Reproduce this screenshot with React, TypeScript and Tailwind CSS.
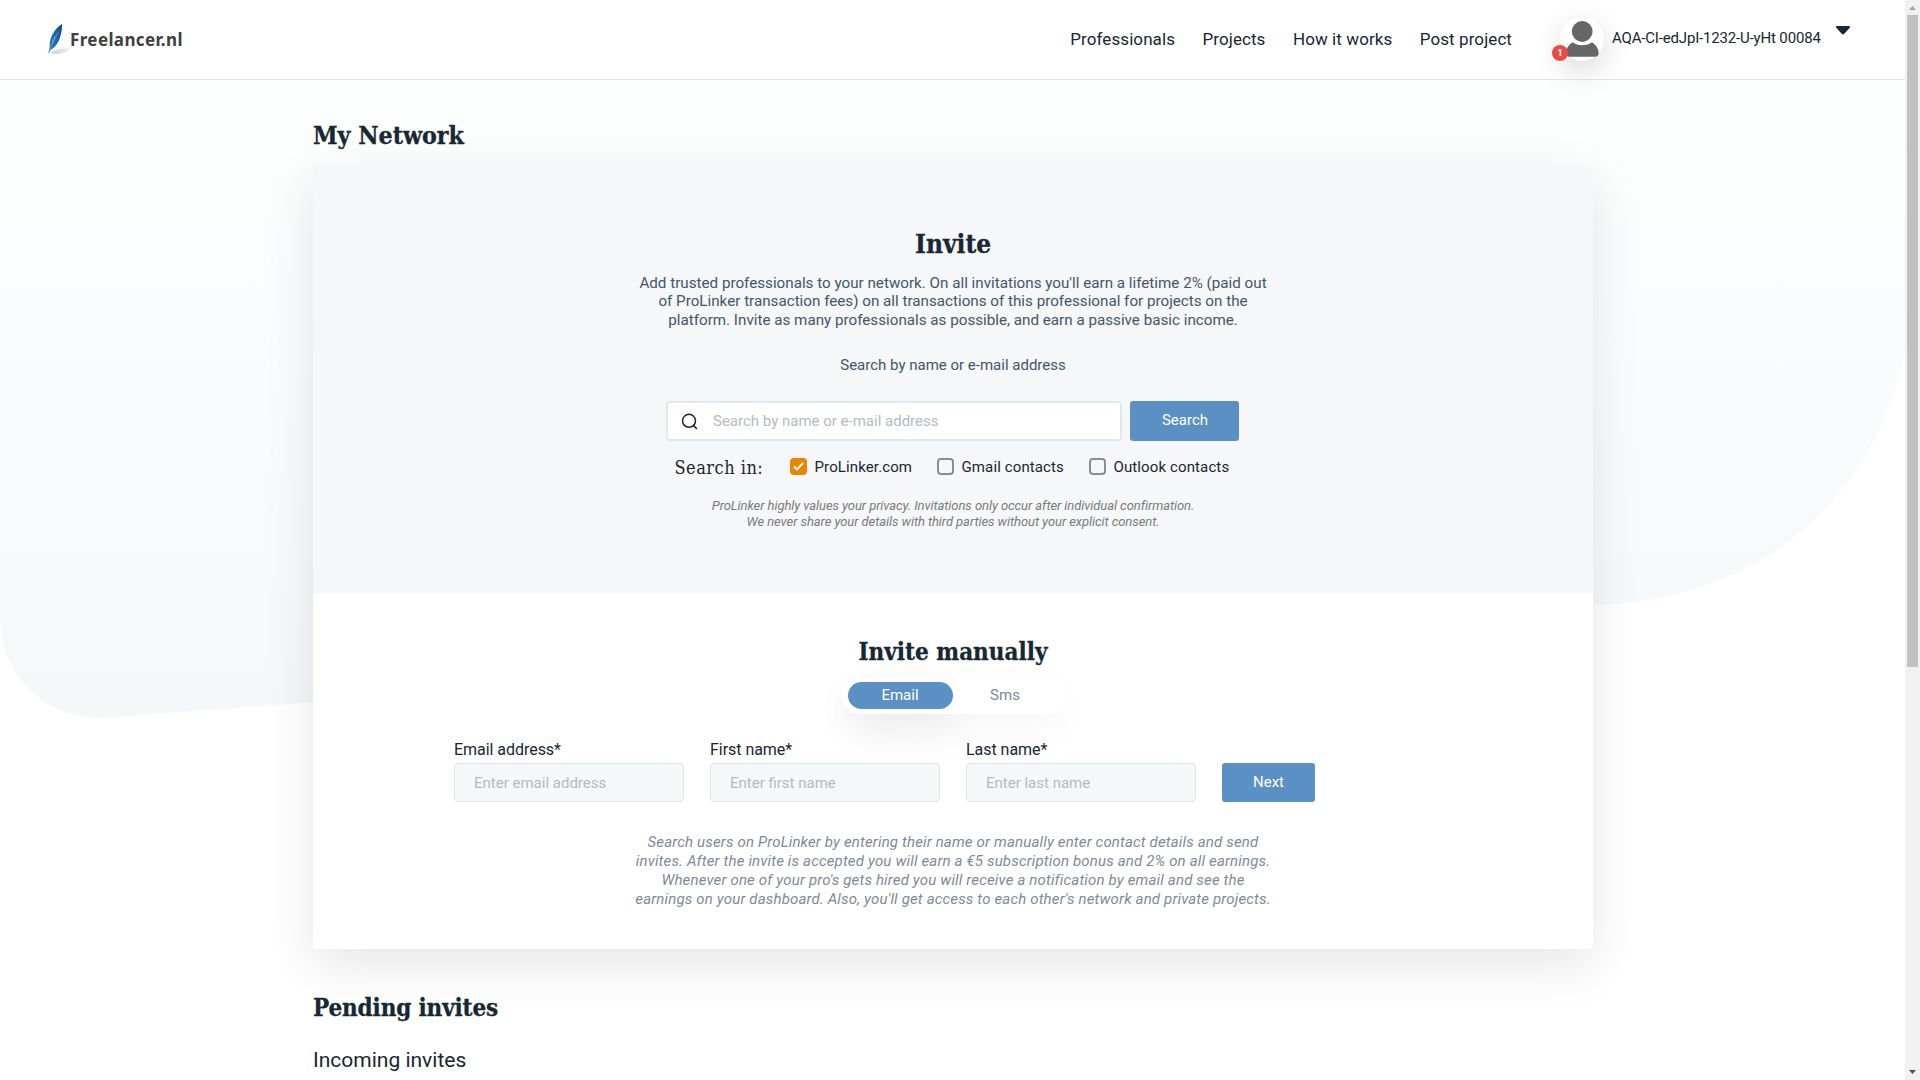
import React from "react";

const SERIF = "font-['DejaVu_Serif_Condensed','DejaVu_Serif',serif]";
const HEADING = `${SERIF} font-bold [-webkit-text-stroke:0.3px_#172733]`;

function Logo() {
  return (
    <a className="flex h-[79px] items-center pl-[47px]">
      <svg width="24" height="34" viewBox="0 0 24 34" className="mt-px shrink-0">
        <defs>
          <linearGradient id="feather" x1="0" y1="1" x2="1" y2="0">
            <stop offset="0" stopColor="#2f7dbd" />
            <stop offset="0.55" stopColor="#1a67aa" />
            <stop offset="1" stopColor="#0b4a80" />
          </linearGradient>
          <linearGradient id="shade" x1="0" y1="0" x2="1" y2="0">
            <stop offset="0" stopColor="#cfcfcf" />
            <stop offset="1" stopColor="#f3f3f3" />
          </linearGradient>
        </defs>
        <path d="M3 30C7 27 16 24.500 24 26C20 30 11 32.500 3 30Z" fill="url(#shade)" />
        <path d="M15.200 1C10.500 3.200 5.200 10 3.300 17C2.600 20 2.800 23.500 2.300 26L1.300 30.300L2 30.300L3.200 27C7.500 25 11.200 20.500 13 14.500C14.500 9.500 15.200 5 15.200 1Z" fill="url(#feather)" />
        <path d="M3 26C5.500 20 8 15 11.500 8.500M5.500 16.500L5.800 20M7.500 13L7.500 17" fill="none" stroke="#9cc4e4" strokeWidth="0.500" />
      </svg>
      <span className="mt-px -ml-px font-['Noto_Sans',sans-serif] text-[17px] leading-6 font-bold tracking-[0.38px] text-[#404040]">
        Freelancer.nl
      </span>
    </a>
  );
}

function Header() {
  return (
    <header className="flex h-20 shrink-0 items-center justify-between border-b border-[#e3e5e6] bg-white pr-[55px]">
      <Logo />
      <div className="flex h-[79px] items-center">
        <nav className="-mt-0.5 flex gap-[27.5px] text-[17px] leading-5 tracking-[0.08px]">
          <a>Professionals</a>
          <a>Projects</a>
          <a>How it works</a>
          <a>Post project</a>
        </nav>
        <div className="relative -mt-px ml-[48px] size-11 rounded-full bg-white shadow-[0_10px_30px_rgba(0,0,0,0.16)]">
          <svg viewBox="0 0 44 44" className="size-11" fill="#666">
            <circle cx="22.200" cy="14.500" r="10.400" />
            <path d="M12.500 25.300C15 27 18.500 28.300 22.200 28.300C26 28.300 29.300 27 32 25.300C35.500 27.500 38.600 31.500 38.600 36C38.600 38.500 37 39.800 35 39.800H9.500C7.300 39.800 6 38.500 6 36C6 31.500 9 27.500 12.500 25.300Z" />
          </svg>
          <span className="absolute top-[28px] -left-[8px] flex size-4 items-center justify-center rounded-full bg-[#e84c42] text-[9px] leading-none font-bold text-white">
            1
          </span>
        </div>
        <span className="mt-[-3px] ml-2 w-[209px] text-[15px] leading-5 tracking-[-0.17px] whitespace-nowrap">
          AQA-CI-edJpI-1232-U-yHt 00084
        </span>
        <svg width="14" height="9" viewBox="0 0 14 9" className="mt-[-19px] ml-[15px]">
          <path d="M0.800 0H13.200C14 0 14.200 1.300 13.500 2L8.300 7.700C7.600 8.500 6.400 8.500 5.700 7.700L0.500 2C-0.200 1.300 0 0 0.800 0Z" fill="#172733" />
        </svg>
      </div>
    </header>
  );
}

function Check({ label, checked, className }: { label: string; checked?: boolean; className: string }) {
  return (
    <label className={`flex items-center gap-2 whitespace-nowrap ${className}`}>
      {checked ? (
        <span className="flex size-[17px] items-center justify-center rounded bg-[#ea8500]">
          <svg width="11" height="9" viewBox="0 0 11 9" fill="none" stroke="#fff" strokeWidth="2">
            <path d="M1 4.500L4 7.500L10 1" />
          </svg>
        </span>
      ) : (
        <span className="size-[17px] rounded border-2 border-[#7f8fa0]" />
      )}
      <span className="mt-0.5 text-[15px] leading-6 tracking-[0.12px]">{label}</span>
    </label>
  );
}

function SearchSection() {
  return (
    <section className="flex h-[428px] flex-col items-center rounded-t bg-[#f5f7f9] pt-[63px]">
      <h2 className={`${HEADING} text-[26px] leading-8`}>Invite</h2>
      <p className="mt-[14px] mb-px text-center text-[15.2px] leading-[18.4px] whitespace-nowrap text-[#435669]">
        Add trusted professionals to your network. On all invitations you'll earn a lifetime 2% (paid out
        <br />
        of ProLinker transaction fees) on all transactions of this professional for projects on the
        <br />
        platform. Invite as many professionals as possible, and earn a passive basic income.
      </p>
      <p className="mt-[25px] text-[15px] leading-5 text-[#435669]">Search by name or e-mail address</p>
      <div className="mt-[26px] mr-[2px] flex h-10 w-[573px] justify-between">
        <div className="flex w-[456px] items-center rounded border-2 border-[#e2e8ee] bg-white pl-[13px]">
          <svg width="17" height="17" viewBox="0 0 17 17" fill="none" stroke="#172733" strokeWidth="1.500">
            <circle cx="8" cy="7.800" r="6.500" />
            <path d="M12.600 12.600L15.500 15.500" strokeLinecap="round" />
          </svg>
          <span className="ml-[15.5px] text-[15px] text-[#b3bcc5]">Search by name or e-mail address</span>
        </div>
        <button className="w-[109px] rounded-[3px] bg-[#5a90c3] pb-[2px] pl-[2px] text-[15px] text-white">Search</button>
      </div>
      <div className="mt-[13px] mr-[2px] flex h-6 w-[573px] pl-[9px]">
        <h5 className={`${SERIF} mt-[2px] w-[115px] text-[18px] leading-6 tracking-[0.5px]`}>Search in:</h5>
        <Check label="ProLinker.com" checked className="w-[147px]" />
        <Check label="Gmail contacts" className="w-[152px]" />
        <Check label="Outlook contacts" className="" />
      </div>
      <p className="mt-5 text-center text-[13px] leading-4 tracking-[-0.074px] whitespace-nowrap text-[#7b7b7b] italic">
        ProLinker highly values your privacy. Invitations only occur after individual confirmation.
        <br />
        We never share your details with third parties without your explicit consent.
      </p>
    </section>
  );
}

function Field({ label, hint }: { label: string; hint: string }) {
  return (
    <label className="relative flex w-[229.5px] flex-col">
      <span className="text-[16px] leading-5 tracking-[-0.04px]">{label}</span>
      <span className="mt-[3px] flex h-[39px] items-center rounded border border-[#e0e6eb] bg-[#f5f7f9] pt-px pl-[19px] text-[15px] text-[#b3bcc2]">
        {hint}
      </span>
    </label>
  );
}

function ManualSection() {
  return (
    <section className="flex h-[356px] flex-col items-center rounded-b bg-white pt-11">
      <h2 className={`${HEADING} text-[24px] leading-[30px]`}>Invite manually</h2>
      <div className="relative mt-[10px] h-[37px] w-[222px]">
        <span className="absolute top-[5px] left-[6px] h-[27px] w-[105px] rounded-full shadow-[0_15px_40px_rgba(0,0,0,0.08)]" />
        <div className="relative flex h-full rounded-full bg-white px-[6px] py-[5px] text-[15px] leading-[26px] shadow-[0_15px_40px_rgba(0,0,0,0.04)]">
          <button className="w-[105px] rounded-full bg-[#5a90c3] pr-px pb-px text-white">Email</button>
          <button className="w-[105px] pr-px pb-px text-[#7c8b9b]">Sms</button>
        </div>
      </div>
      <div className="mt-[26px] flex items-end gap-[26.5px] self-start pl-[141px]">
        <Field label="Email address*" hint="Enter email address" />
        <Field label="First name*" hint="Enter first name" />
        <Field label="Last name*" hint="Enter last name" />
        <button className="h-[39px] w-[93px] rounded-[3px] bg-[#5a90c3] pb-px text-[15px] text-white">Next</button>
      </div>
      <p className="mt-[31px] text-center text-[15px] leading-[18.95px] tracking-[0.165px] whitespace-nowrap text-[#7c8b9b] italic">
        Search users on ProLinker by entering their name or manually enter contact details and send
        <br />
        invites. After the invite is accepted you will earn a €5 subscription bonus and 2% on all earnings.
        <br />
        Whenever one of your pro's gets hired you will receive a notification by email and see the
        <br />
        earnings on your dashboard. Also, you'll get access to each other's network and private projects.
      </p>
    </section>
  );
}

function Backdrop() {
  return (
    <svg className="absolute inset-0" width="1905" height="720" viewBox="0 0 1905 720">
      <defs>
        <linearGradient id="backdrop" x1="0" y1="80" x2="0" y2="718" gradientUnits="userSpaceOnUse">
          <stop offset="0" stopColor="#fdfefe" />
          <stop offset="0.5" stopColor="#fafbfc" />
          <stop offset="1" stopColor="#f5f7f9" />
        </linearGradient>
      </defs>
      <path
        d="M0 80H1905V350C1880 484 1775 594 1610 604L127 716.300C115 717.300 108 717.700 100 717.700C42 717.700 3 675 0 620Z"
        fill="url(#backdrop)"
      />
    </svg>
  );
}

function Scrollbar() {
  return (
    <div className="flex w-[15px] shrink-0 flex-col items-center justify-between bg-[#f1f1f1]">
      <div className="flex flex-col items-center">
        <svg width="15" height="15" viewBox="0 0 15 15">
          <path d="M4 10L7.500 6L11 10Z" fill="#a3a3a3" />
        </svg>
        <div className="h-[652px] w-[11px] bg-[#c1c1c1]" />
      </div>
      <svg width="15" height="15" viewBox="0 0 15 15">
        <path d="M4 5L7.500 9L11 5Z" fill="#505050" />
      </svg>
    </div>
  );
}

export default function App() {
  return (
    <div className="flex h-[1080px] w-[1920px] overflow-hidden bg-white font-[Roboto,sans-serif] text-[#172733]">
      <div className="relative flex w-[1905px] flex-col overflow-hidden">
        <Backdrop />
        <div className="relative z-10">
          <Header />
        </div>
        <main className="relative ml-[313px] w-[1280px]">
          <h1 className={`${HEADING} mt-[41px] text-[24.7px] leading-[30px]`}>My Network</h1>
          <div className="mt-[14px] rounded shadow-[0_16px_50px_rgba(0,0,0,0.1)]">
            <SearchSection />
            <ManualSection />
          </div>
          <h2 className={`${HEADING} mt-11 text-[24px] leading-[30px] tracking-[-0.14px]`}>Pending invites</h2>
          <h3 className="mt-6 text-[21px] leading-[26px]">Incoming invites</h3>
        </main>
      </div>
      <Scrollbar />
    </div>
  );
}
